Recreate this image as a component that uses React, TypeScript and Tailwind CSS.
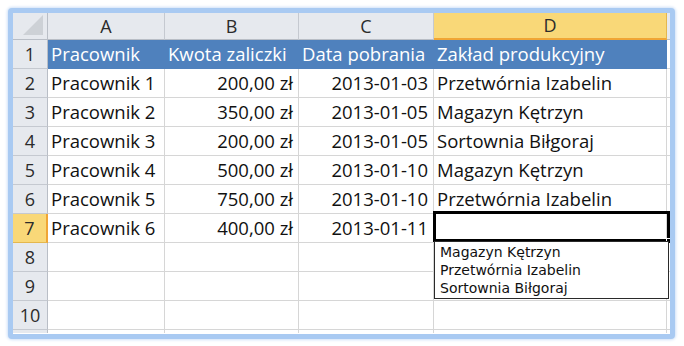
import React from "react";

const cols = ["A", "B", "C", "D"];
const rows: [string, string, string, string][] = [
  ["Pracownik 1", "200,00 zł", "2013-01-03", "Przetwórnia Izabelin"],
  ["Pracownik 2", "350,00 zł", "2013-01-05", "Magazyn Kętrzyn"],
  ["Pracownik 3", "200,00 zł", "2013-01-05", "Sortownia Biłgoraj"],
  ["Pracownik 4", "500,00 zł", "2013-01-10", "Magazyn Kętrzyn"],
  ["Pracownik 5", "750,00 zł", "2013-01-10", "Przetwórnia Izabelin"],
  ["Pracownik 6", "400,00 zł", "2013-01-11", ""],
];

const font = { fontFamily: '"Open Sans", "Noto Sans", sans-serif' };

function RowHeader({ n, sel }: { n: number | string; sel?: boolean }) {
  return (
    <div
      className={
        "flex items-center justify-center border-b text-[18px] text-[#2b2b2b] " +
        (sel
          ? "bg-[#f9d878] border-b-[#e4b74e] border-r-2 border-r-[#f0a535]"
          : "bg-[#e6e9ee] border-b-[#c5c9d0] border-r border-r-[#b9bec6]")
      }
    >
      {n}
    </div>
  );
}

function Cell({
  children,
  right,
}: {
  children?: React.ReactNode;
  right?: boolean;
}) {
  return (
    <div
      className={
        "flex items-center border-r border-b border-[#d6d6d6] bg-white text-[18.5px] text-[#111] whitespace-nowrap overflow-hidden " +
        (right ? "justify-end pr-[5px]" : "pl-[3px]")
      }
    >
      {children}
    </div>
  );
}

export default function App() {
  return (
    <div className="w-[684px] h-[346px] bg-white relative" style={font}>
      <div className="absolute left-[8px] top-[8px] w-[667px] h-[331px] rounded-[4px] border-[5px] border-[#a9caf2] shadow-[0_0_3px_1px_#cfe1f8] bg-white overflow-hidden">
        <div className="grid grid-cols-[35px_117px_134px_135px_233px_3px] grid-rows-[27px_repeat(10,29px)_3px] relative">
          {/* corner */}
          <div className="relative bg-[#e6e9ee] border-r border-b border-[#b9bec6]">
            <div className="absolute right-[4px] bottom-[4px] w-0 h-0 border-l-[20px] border-l-transparent border-b-[20px] border-b-[#cdd1d6]" />
          </div>
          {cols.map((c) => (
            <div
              key={c}
              className={
                "flex items-center justify-center border-r text-[18px] text-[#2b2b2b] " +
                (c === "D"
                  ? "bg-[#f9d878] border-r-[#e4b74e] border-b-2 border-b-[#f0a535]"
                  : "bg-[#e6e9ee] border-r-[#c5c9d0] border-b border-b-[#b9bec6]")
              }
            >
              {c}
            </div>
          ))}
          <div className="bg-[#e6e9ee] border-b border-[#b9bec6]" />

          {/* header row 1 */}
          <RowHeader n={1} />
          {["Pracownik", "Kwota zaliczki", "Data pobrania", "Zakład produkcyjny"].map(
            (h) => (
              <div
                key={h}
                className="flex items-center pl-[3px] bg-[#4f81bd] text-white text-[18.5px] whitespace-nowrap overflow-hidden border-b border-[#4f81bd]"
              >
                {h}
              </div>
            )
          )}
          <div className="bg-white border-b border-[#d6d6d6]" />

          {rows.map((r, i) => (
            <React.Fragment key={i}>
              <RowHeader n={i + 2} sel={i === 5} />
              <Cell>{r[0]}</Cell>
              <Cell right>{r[1]}</Cell>
              <Cell right>{r[2]}</Cell>
              <Cell>{r[3]}</Cell>
              <div className="bg-white border-b border-[#d6d6d6]" />
            </React.Fragment>
          ))}

          {[8, 9, 10].map((n) => (
            <React.Fragment key={n}>
              <RowHeader n={n} />
              <Cell />
              <Cell />
              <Cell />
              <Cell />
              <div className="bg-white border-b border-[#d6d6d6]" />
            </React.Fragment>
          ))}
          <div className="bg-[#e6e9ee] border-r border-[#b9bec6]" />
          <div className="bg-white border-r border-[#d6d6d6]" />
          <div className="bg-white border-r border-[#d6d6d6]" />
          <div className="bg-white border-r border-[#d6d6d6]" />
          <div className="bg-white border-r border-[#d6d6d6]" />
          <div className="bg-white" />

          {/* selected cell D7 */}
          <div className="absolute left-[420px] top-[198px] w-[237px] h-[31px] border-[3px] border-black pointer-events-none">
            <div className="absolute right-[-5px] bottom-[-5px] w-[6px] h-[6px] bg-black border border-white" />
          </div>

          {/* dropdown list */}
          <div
            className="absolute left-[421px] top-[228px] w-[235px] h-[58px] bg-white border-[1.5px] border-[#2a2a2a] pl-[5px] pt-[1px] text-[14px] leading-[18px] text-[#111]"
            style={{ fontFamily: '"DejaVu Sans", sans-serif' }}
          >
            <div>Magazyn Kętrzyn</div>
            <div>Przetwórnia Izabelin</div>
            <div>Sortownia Biłgoraj</div>
          </div>
        </div>
      </div>
    </div>
  );
}
